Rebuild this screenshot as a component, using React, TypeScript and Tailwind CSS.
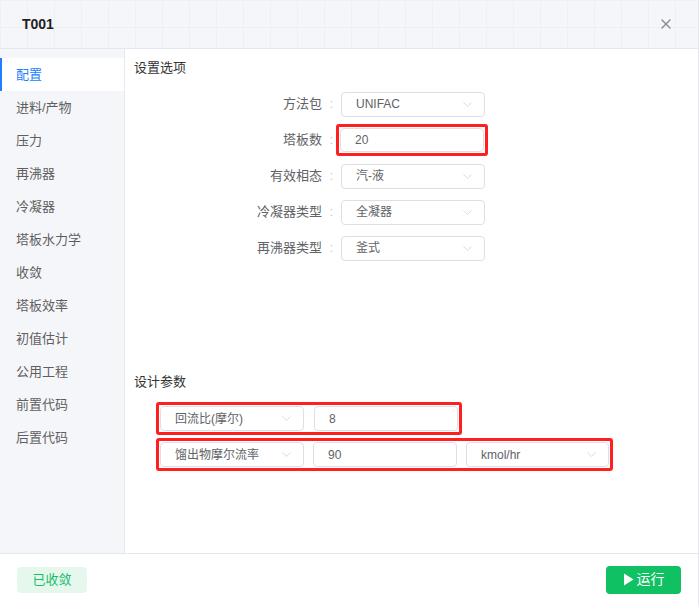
import { ChevronDown, X } from "lucide-react";

const navItems = [
  "配置",
  "进料/产物",
  "压力",
  "再沸器",
  "冷凝器",
  "塔板水力学",
  "收敛",
  "塔板效率",
  "初值估计",
  "公用工程",
  "前置代码",
  "后置代码",
];

const SelectBox = ({ value, width = "w-[144px]" }: { value: string; width?: string }) => (
  <div
    className={`${width} h-[25px] flex items-center justify-between pl-[14px] pr-[9px] border border-[#dcdfe6] rounded-[4px] bg-white text-[12px] text-[#606266]`}
  >
    <span>{value}</span>
    <ChevronDown size={15} strokeWidth={1} className="text-[#c0c4cc]" />
  </div>
);

const InputBox = ({ value, width = "w-[144px]" }: { value: string; width?: string }) => (
  <div
    className={`${width} h-[25px] flex items-center pl-[14px] border border-[#dcdfe6] rounded-[4px] bg-white text-[12px] text-[#606266]`}
  >
    {value}
  </div>
);

const FormRow = ({ label, children }: { label: string; children: React.ReactNode }) => (
  <div className="flex items-center h-[24px]">
    <div className="w-[188px] text-right text-[13px] text-[#606266]">{label}</div>
    <div className="w-[19px] text-center text-[12px] text-[#c0c4cc]">:</div>
    {children}
  </div>
);

const App = () => {
  return (
    <div
      className="w-[699px] h-[605px] flex flex-col bg-white border-r border-[#e4e7ed] overflow-hidden"
      style={{ fontFamily: '"Liberation Sans", "Noto Sans CJK SC", sans-serif' }}
    >
      {/* Header */}
      <div className="h-[49px] shrink-0 flex items-center justify-between pl-[22px] pr-[24px] border-b border-[#e4e7ed] bg-[#f5f6f9] bg-[linear-gradient(to_right,#eef0f4_1px,transparent_1px),linear-gradient(to_bottom,#eef0f4_1px,transparent_1px)] bg-[size:27px_27px]">
        <span className="text-[14px] font-bold text-[#1f1f1f]">T001</span>
        <X size={16} strokeWidth={2} className="text-[#8c8c8c]" />
      </div>

      {/* Body */}
      <div className="flex-1 flex min-h-0">
        <div className="w-[125px] shrink-0 bg-[#f5f6fa] border-r border-[#e8eaef] pt-[9px]">
          {navItems.map((item, i) => (
            <div
              key={item}
              className={
                i === 0
                  ? "h-[33px] flex items-center pl-[14px] bg-white border-l-2 border-[#1e80ff] text-[13px] text-[#1e80ff]"
                  : "h-[33px] flex items-center pl-[16px] text-[13px] text-[#5f5f5f]"
              }
            >
              {item}
            </div>
          ))}
        </div>

        <div className="flex-1 pl-[9px] pt-[9px]">
          <div className="h-[314px]">
            <div className="h-[20px] leading-[20px] text-[13px] text-[#333]">设置选项</div>
            <div className="mt-[14px] flex flex-col gap-[12px]">
              <FormRow label="方法包">
                <SelectBox value="UNIFAC" />
              </FormRow>
              <FormRow label="塔板数">
                <div className="-m-[5px] p-px border-[3px] border-[#ff1f1f] rounded-[3px]">
                  <div className="w-[144px] h-[24px] flex items-center pl-[14px] border border-[#dcdfe6] rounded-[4px] bg-white text-[12px] text-[#606266]">
                    20
                  </div>
                </div>
              </FormRow>
              <FormRow label="有效相态">
                <SelectBox value="汽-液" />
              </FormRow>
              <FormRow label="冷凝器类型">
                <SelectBox value="全凝器" />
              </FormRow>
              <FormRow label="再沸器类型">
                <SelectBox value="釜式" />
              </FormRow>
            </div>
          </div>

          <div className="h-[20px] leading-[20px] text-[13px] text-[#333]">设计参数</div>
          <div className="mt-[10px] ml-[22px] flex flex-col items-start gap-[3px]">
            <div className="inline-flex gap-[10px] p-px border-[3px] border-[#ff1f1f] rounded-[3px]">
              <SelectBox value="回流比(摩尔)" />
              <InputBox value="8" />
            </div>
            <div className="inline-flex gap-[9px] p-px border-[3px] border-[#ff1f1f] rounded-[3px]">
              <SelectBox value="馏出物摩尔流率" />
              <InputBox value="90" />
              <SelectBox value="kmol/hr" width="w-[143px]" />
            </div>
          </div>
        </div>
      </div>

      {/* Footer */}
      <div className="h-[52px] shrink-0 flex items-center justify-between pl-[17px] pr-[17px] border-t border-[#e4e7ed]">
        <div className="w-[70px] h-[26px] flex items-center justify-center rounded-[4px] bg-[#e6f7ee] text-[13px] text-[#19be6b]">
          已收敛
        </div>
        <div className="w-[75px] h-[28px] flex items-center justify-center gap-[3px] rounded-[4px] bg-[#0fc163] text-[14px] text-white">
          <svg width="11" height="13" viewBox="0 0 11 13">
            <path d="M1 0.5 L10.5 6.5 L1 12.5 Z" fill="white" />
          </svg>
          <span>运行</span>
        </div>
      </div>
    </div>
  );
};

export default App;
